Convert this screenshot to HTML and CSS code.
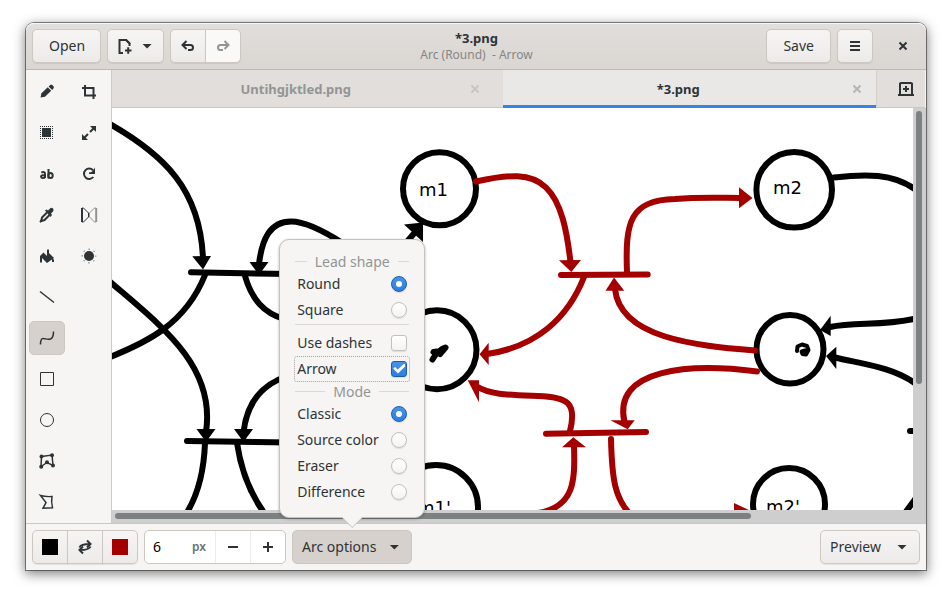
FILE: index.html
```html
<!DOCTYPE html>
<html lang="en">
<head>
<meta charset="utf-8">
<title>*3.png</title>
<link rel="stylesheet" href="styles.css">
</head>
<body>
<main class="window">
  <header class="headerbar">
    <div class="bar-group">
      <button class="btn btn-open" type="button">Open</button>
      <button class="btn btn-new" type="button" aria-label="New image">
        <svg class="icon" viewBox="0 0 16 16"><path d="M6 15H2.500V2H9L12.500 5.500V8" class="line2"/><path d="M8.500 1v1.500L12 6h1.500V5l-4-4z"/><path d="M8 12.500h6.500M11.200 9.300v6.500" class="line2"/></svg>
        <span class="caret"></span>
      </button>
      <div class="linked">
        <button class="btn btn-icon" type="button" aria-label="Undo"><svg class="icon" viewBox="0 0 16 16"><path d="M4 7h6.500a2.500 2.500 0 0 1 0 5H8" class="line2"/><path d="M6.500 3L2.500 7l4 4" class="line2"/></svg></button>
        <button class="btn btn-icon" type="button" aria-label="Redo" disabled><svg class="icon" viewBox="0 0 16 16"><path d="M12 7H5.500a2.500 2.500 0 0 0 0 5H8" class="line2"/><path d="M9.500 3l4 4-4 4" class="line2"/></svg></button>
      </div>
    </div>
    <div class="titles">
      <h1 class="title">*3.png</h1>
      <p class="subtitle">Arc (Round)&nbsp; - Arrow</p>
    </div>
    <div class="bar-group bar-end">
      <button class="btn btn-save" type="button">Save</button>
      <button class="btn btn-icon" type="button" aria-label="Menu"><svg class="icon" viewBox="0 0 16 16"><path d="M3 4h10M3 8h10M3 12h10" class="line2"/></svg></button>
      <button class="window-close" type="button" aria-label="Close"><svg class="icon" viewBox="0 0 16 16"><path d="M4.500 4.500l7 7M11.500 4.500l-7 7" class="line2"/></svg></button>
    </div>
  </header>

  <div class="workspace">
    <nav class="tools" aria-label="Tools">
      <button class="tool" type="button" aria-label="Pencil"><svg class="icon" viewBox="0 0 16 16"><path d="M1.500 13.500l1-4.200L8.700 3.200l3.500 3.500L6 12.700z"/><path d="M9.600 2.400l1.600-1.500q1-.8 2 .2l1.200 1.200q1 1 .2 2L13.100 5.900z"/></svg></button>
      <button class="tool" type="button" aria-label="Crop"><svg class="icon" viewBox="0 0 16 16"><path d="M1 4h11.500v11M4 1v10.500h11" class="line2"/></svg></button>
      <button class="tool" type="button" aria-label="Rectangle selection"><svg class="icon" viewBox="0 0 16 16"><path d="M3 3h9v9H3z"/><path d="M1 1.500h13M1 13.500h13M1.500 1v13M13.500 1v13" class="line1" stroke-dasharray="1 1"/></svg></button>
      <button class="tool" type="button" aria-label="Scale"><svg class="icon" viewBox="0 0 16 16"><path d="M9 1h6v6L12.800 4.800 11.200 3.200zM1 9v6h6L4.800 12.800 3.200 11.200z"/><path d="M12.500 3.500L9 7M3.500 12.500L7 9" class="line2"/></svg></button>
      <button class="tool" type="button" aria-label="Text"><svg class="icon" viewBox="0 0 16 16"><path d="M2.300 6.500Q6 5 6 8v4M6 9Q2 9 2 10.600 2.200 12 4 12q1.500 0 2-1M9.500 3v9.500" class="line2"/><ellipse cx="11.500" cy="9.500" rx="2.200" ry="2.600" class="line2"/></svg></button>
      <button class="tool" type="button" aria-label="Rotate"><svg class="icon" viewBox="0 0 16 16"><path d="M12 4.200A5.200 5.200 0 1 0 12.300 11" class="line2"/><path d="M14 1.500V8H8v-1.500l2.500-.5 1.500-1.500z"/></svg></button>
      <button class="tool" type="button" aria-label="Color picker"><svg class="icon" viewBox="0 0 16 16"><path d="M8 5.500L3 10.500 2.200 14 5.500 13 10.500 8" class="line2"/><path d="M6 3.500l1.500-1 1.500 1 2-2q1.500-1.300 3 0 1.300 1.500 0 3l-2 2 1 1.500L11.500 10z"/><path d="M1 15l2-2" class="line2"/></svg></button>
      <button class="tool" type="button" aria-label="Flip"><svg class="icon" viewBox="0 0 16 16"><path d="M1 1v14" class="line2"/><path d="M1 1h1.500L7.500 6v4l-5 5H1" class="line1"/><g opacity=".5"><path d="M15.200 1v14" class="line2"/><path d="M15 1h-1.500L8.500 6v4l5 5H15" class="line1"/></g></svg></button>
      <button class="tool" type="button" aria-label="Fill"><svg class="icon" viewBox="0 0 16 16"><path d="M4.500 4.500L8 8V2q1-1.500 2 0v3l5 5-7 5-5-5v4.500H1V8z"/><path d="M13 9l2 3v2h-2z"/></svg></button>
      <button class="tool" type="button" aria-label="Filters"><svg class="icon" viewBox="0 0 16 16"><circle cx="8" cy="8" r="5"/><circle cx="8" cy="8" r="6.800" class="line1" stroke-dasharray="1.200 4.140" stroke-dashoffset=".6"/></svg></button>
      <button class="tool first" type="button" aria-label="Line"><svg class="icon" viewBox="0 0 16 16"><path d="M1 2.500l14 11" class="line1 thick"/></svg></button>
      <button class="tool first active" type="button" aria-label="Arc" aria-pressed="true"><svg class="icon" viewBox="0 0 16 16"><path d="M1.500 14.500C1.500 10 2 8.500 4 8.500s5 1.500 7.500.5 3-4 3-7.500" class="line1 thick"/></svg></button>
      <button class="tool first" type="button" aria-label="Rectangle"><svg class="icon" viewBox="0 0 16 16"><path d="M1.500 1.500h13v13h-13z" class="line1"/></svg></button>
      <button class="tool first" type="button" aria-label="Circle"><svg class="icon" viewBox="0 0 16 16"><circle cx="8" cy="8" r="6.500" class="line1"/></svg></button>
      <button class="tool first" type="button" aria-label="Polygon"><svg class="icon" viewBox="0 0 16 16"><path d="M2.500 3.500L13 2l1 10.500L8 9.500l-6 4z" class="line1 thick"/><g><circle cx="2.500" cy="3.500" r="2"/><circle cx="13" cy="2.200" r="2"/><circle cx="14" cy="12.500" r="2"/><circle cx="8" cy="9.300" r="2"/><circle cx="2.200" cy="13.800" r="2"/></g></svg></button>
      <button class="tool first" type="button" aria-label="Freeform shape"><svg class="icon" viewBox="0 0 16 16"><path d="M1.500 1.500q5 1.500 11.500 1-1 4.500.5 11.300L4 14.300 7 8.500z" class="line1 thick"/></svg></button>
    </nav>

    <section class="document">
      <div class="tabs">
        <div class="tab tab-idle"><span class="tab-name">Untihgjktled.png</span><button class="tab-close" type="button" aria-label="Close tab"><svg class="icon" viewBox="0 0 16 16"><path d="M4.500 4.500l7 7M11.500 4.500l-7 7" class="line2"/></svg></button></div>
        <div class="tab tab-current"><span class="tab-name">*3.png</span><button class="tab-close" type="button" aria-label="Close tab"><svg class="icon" viewBox="0 0 16 16"><path d="M4.500 4.500l7 7M11.500 4.500l-7 7" class="line2"/></svg></button></div>
        <button class="tab-new" type="button" aria-label="New tab"><svg class="icon" viewBox="0 0 16 16"><path d="M2 14V2.500L3 2h10l1 .5V14M0 14h16M8 5v6M5 8h6" class="line2"/></svg></button>
      </div>
      <div class="viewport">
        <svg class="drawing" role="img" aria-label="Drawing">
          <g transform="translate(-112 -108)">
            <g class="ink">
              <path d="M108 123C165 155 200 190 203 258"/>
              <path d="M191 272.300L290 274"/>
              <path d="M344 244C321 229 304 221.500 291 221.500C270 221.500 262 239 259 264"/>
              <path d="M205 275C185 325 145 343 110 357"/>
              <path d="M245 276C252 300 264 313 284 319"/>
              <path d="M108 280C160 325 216 365 206 432"/>
              <path d="M288 376C262 384 247 403 243.500 432"/>
              <path d="M187 441L290 442.500"/>
              <path d="M205 443C204 470 198 495 186 514"/>
              <path d="M237 443C241 470 251 495 265 514"/>
              <path d="M417 230L405 244"/>
              <circle cx="439.500" cy="188.700" r="36.500"/>
              <circle cx="437" cy="349.700" r="39.500"/>
              <circle cx="436" cy="507" r="42"/>
              <circle cx="794.200" cy="189.800" r="37.800"/>
              <ellipse cx="790" cy="349.300" rx="33.500" ry="34.200"/>
              <circle cx="789" cy="504" r="36"/>
              <path d="M834 177.500C865 174 893 173 916 190"/>
              <path d="M830 327C855 322 885 326 916 318.500"/>
              <path d="M835 357.500C862 364 893 367 916 384"/>
              <path d="M910 431h12M905 513L919 494"/>
              <path d="M432.500 359.500L436 354L433.500 352L437 351.500L440 354L445.500 347.500L442 349L437 353"/>
              <path d="M797 351L797.500 346.500L802 344.500L807 346L808.500 350L806 354.500L802.500 354L801.500 351.500L805 350.500" stroke-width="4"/>
            </g>
            <g class="heads">
              <path d="M192.300 256.300L211 256L203 269.500z"/>
              <path d="M249.500 262h19L259 275z"/>
              <path d="M196.500 429h19L206 442z"/>
              <path d="M234 429h19L243.500 442z"/>
              <path d="M404 224.500L423 222.500V242z"/>
              <path d="M820 330L830.700 315.700V336z"/>
              <path d="M826 356L836.300 346.700V369z"/>
            </g>
            <g class="ink red">
              <path d="M476 181.500C508 174.500 531 172.500 546 187.500C562 203 567 232 570.500 262"/>
              <path d="M561 275L647.700 274.500"/>
              <path d="M584 277C568 318 536 347 487 354"/>
              <path d="M627 272C625 222 630 200 675 199C700 197 720 198 742 198"/>
              <path d="M755 350.500C695 345.500 620 338 615 289"/>
              <path d="M757 371.500C690 363 612 368 624.500 422"/>
              <path d="M546 433.700L646 432"/>
              <path d="M570 431C577 403 568 397 538 396C510 395 490 395 476 386"/>
              <path d="M574 446C575 480 575 507 538 513"/>
              <path d="M611 439C612 480 615 498 630 514"/>
            </g>
            <g class="heads red">
              <path d="M559 260.300L581 260L571.300 272z"/>
              <path d="M479.500 354.300L488.700 342.700V365z"/>
              <path d="M739 187.300V208.300L752.500 198z"/>
              <path d="M614 277.500L605.500 290.700H624.300z"/>
              <path d="M610.300 420.300H634.700L627.700 429.300z"/>
              <path d="M467.700 380.300H479V402.300z"/>
              <path d="M573.300 437.300L562 447.300H586z"/>
              <path d="M734 503V522L751 511z"/>
            </g>
            <g class="labels">
              <text x="419" y="196">m1</text>
              <text x="773" y="194">m2</text>
              <text x="417" y="514">m1'</text>
              <text x="766" y="513">m2'</text>
            </g>
          </g>
        </svg>
        <div class="scroll-v"><span class="thumb-v"></span></div>
        <div class="scroll-h"><span class="thumb-h"></span></div>
      </div>
    </section>
  </div>

  <footer class="actionbar">
    <div class="linked">
      <button class="btn btn-icon" type="button" aria-label="Main color"><span class="swatch"></span></button>
      <button class="btn btn-icon" type="button" aria-label="Swap colors"><svg class="icon" viewBox="0 0 16 16"><path d="M2.500 8.500C3.500 5.800 6 5 13 5M10 1.500L13.500 5 10 8.500" class="line2"/><path d="M13.500 7.500C12.500 10.200 10 11 3 11M6 7.500L2.500 11 6 14.500" class="line2"/></svg></button>
      <button class="btn btn-icon" type="button" aria-label="Secondary color"><span class="swatch swatch-red"></span></button>
    </div>
    <div class="spin">
      <label class="spin-entry"><input class="spin-input" type="text" inputmode="numeric" value="6" aria-label="Tool width"><span class="unit">px</span></label>
      <button class="spin-step" type="button" aria-label="Decrease"><svg class="icon" viewBox="0 0 16 16"><path d="M3 8h10" class="line2"/></svg></button>
      <button class="spin-step" type="button" aria-label="Increase"><svg class="icon" viewBox="0 0 16 16"><path d="M3 8h10M8 3v10" class="line2"/></svg></button>
    </div>
    <div class="menu-anchor">
      <button class="btn btn-menu btn-pressed" type="button" aria-expanded="true">Arc options<span class="caret"></span></button>
      <form class="popover">
        <p class="heading">Lead shape</p>
        <label class="option">Round<input class="radio" type="radio" name="shape" checked></label>
        <label class="option">Square<input class="radio" type="radio" name="shape"></label>
        <hr class="divider">
        <label class="option">Use dashes<input class="check" type="checkbox"></label>
        <label class="option focused">Arrow<input class="check" type="checkbox" checked></label>
        <p class="heading">Mode</p>
        <label class="option">Classic<input class="radio" type="radio" name="mode" checked></label>
        <label class="option">Source color<input class="radio" type="radio" name="mode"></label>
        <label class="option">Eraser<input class="radio" type="radio" name="mode"></label>
        <label class="option">Difference<input class="radio" type="radio" name="mode"></label>
      </form>
    </div>
    <button class="btn btn-menu btn-preview" type="button">Preview<span class="caret"></span></button>
  </footer>
</main>
</body>
</html>
```
FILE: styles.css
```css
* {
  box-sizing: border-box;
}

body {
  margin: 0;
  min-height: 100vh;
  padding: 23px 26px 29px;
  display: flex;
  background: #fff;
  color: #2e3436;
  font: 14px/20px "Noto Sans", sans-serif;
}

button,
input {
  font: inherit;
  color: inherit;
  margin: 0;
}

button {
  padding: 0;
  border: 0;
  background: none;
  display: flex;
  align-items: center;
  justify-content: center;
}

.window {
  flex: 1;
  min-width: 0;
  display: flex;
  flex-direction: column;
  border-radius: 8px 8px 0 0;
  background: #f6f5f4;
  box-shadow: 0 3px 12px 1px rgba(0, 0, 0, .5), 0 0 0 1px #8e8e8e;
}

.icon {
  width: 16px;
  height: 16px;
  fill: currentColor;
  overflow: visible;
}

.line1,
.line2 {
  fill: none;
  stroke: currentColor;
  stroke-width: 1;
}

.line2 {
  stroke-width: 2;
}

.thick {
  stroke-width: 1.5;
}

.caret {
  width: 10px;
  height: 5px;
  background: currentColor;
  clip-path: polygon(0 0, 100% 0, 50% 100%);
}

/* Header */
.headerbar {
  height: 47px;
  display: grid;
  grid-template-columns: 1fr auto 1fr;
  align-items: center;
  padding: 0 5px 0 6px;
  border-bottom: 1px solid #bfb8b1;
  border-radius: 8px 8px 0 0;
  background: linear-gradient(#e1dedb, #dad6d2);
  box-shadow: inset 0 1px #f9f8f8;
}

.bar-group {
  display: flex;
  gap: 6px;
}

.bar-end {
  justify-content: flex-end;
}

.btn {
  height: 34px;
  border: 1px solid #cdc7c2;
  border-radius: 5px;
  background: linear-gradient(#f6f5f4, #edebe9);
  box-shadow: 0 1px 1px rgba(0, 0, 0, .07);
}

.btn-open,
.btn-save {
  padding: 0 16px;
}

.btn-open {
  padding-right: 15px;
}

.btn-new {
  padding: 0 11px 0 9px;
  gap: 9px;
}

.btn-icon {
  width: 36px;
}

.btn:disabled {
  color: #929595;
  background: #faf9f8;
}

.linked {
  display: flex;
}

.linked .btn + .btn {
  margin-left: -1px;
}

.linked .btn:not(:last-child) {
  border-top-right-radius: 0;
  border-bottom-right-radius: 0;
}

.linked .btn:not(:first-child) {
  border-top-left-radius: 0;
  border-bottom-left-radius: 0;
}

.titles {
  text-align: center;
}

.title {
  margin: 0;
  font-size: 13px;
  font-weight: 700;
  line-height: 18px;
}

.subtitle {
  margin: 0;
  font-size: 12px;
  line-height: 16px;
  color: #868686;
}

.window-close {
  width: 36px;
  height: 34px;
  margin-left: 6px;
}

/* Workspace */
.workspace {
  flex: 1;
  display: flex;
  min-height: 0;
}

.tools {
  display: grid;
  grid-template-columns: 36px 36px;
  grid-auto-rows: 34px;
  gap: 7px 6px;
  padding: 5px 4px 3px 3px;
  border-right: 1px solid #cdc9c5;
}

.tool {
  border: 1px solid transparent;
  border-radius: 5px;
}

.first {
  grid-column: 1;
}

.active {
  background: #d6d1cd;
  border-color: #cdc7c2;
}

.document {
  flex: 1;
  min-width: 0;
  display: flex;
  flex-direction: column;
}

.tabs {
  display: flex;
  height: 38px;
  margin-right: 1px;
  background: #e1dedb;
  border-bottom: 1px solid #cdc7c2;
}

.tab {
  flex: 1 1 0;
  display: flex;
  align-items: center;
  height: 38px;
  font-size: 13px;
  font-weight: 700;
}

.tab-idle {
  padding: 0 19px 0 14px;
  color: #929595;
  height: 37px;
}

.tab-current {
  padding: 0 10px 0 6px;
  background: #eae8e6;
  box-shadow: inset 0 -3px #3584e4;
}

.tab-name {
  flex: 1;
  text-align: center;
}

.tab-close {
  width: 18px;
  height: 18px;
  color: #b5b5b3;
}

.tab-idle .tab-close {
  color: #c8c6c3;
}

.tab-new {
  width: 49px;
  padding-left: 10px;
  border-left: 1px solid #d5d0cc;
}

.viewport {
  flex: 1;
  min-height: 0;
  display: grid;
  grid-template: minmax(0, 1fr) 13px / minmax(0, 1fr) 13px;
  background: #cecece;
}

.drawing {
  width: 100%;
  height: 100%;
  background: #fff;
  overflow: hidden;
}

.ink {
  fill: none;
  stroke: #000;
  stroke-width: 6;
  stroke-linecap: round;
  stroke-linejoin: round;
}

.ink.red {
  stroke: #a40000;
}

.heads.red {
  fill: #a40000;
}

.labels {
  font: 18px "DejaVu Sans", sans-serif;
}

.scroll-v,
.scroll-h {
  padding: 3px;
}

.scroll-h {
  grid-column: 1;
}

.thumb-v,
.thumb-h {
  display: block;
  border-radius: 3px;
  background: #7e8182;
}

.thumb-v {
  width: 6px;
  height: 69%;
}

.thumb-h {
  width: 80%;
  height: 6px;
}

/* Bottom bar */
.actionbar {
  display: flex;
  gap: 6px;
  padding: 6px;
  border-top: 1px solid #cdc7c2;
}

.swatch {
  width: 16px;
  height: 16px;
  background: #000;
}

.swatch-red {
  background: #a40000;
}

.spin {
  display: flex;
  height: 34px;
  border: 1px solid #cdc7c2;
  border-radius: 5px;
  background: #fff;
  overflow: hidden;
}

.spin-entry {
  display: flex;
  align-items: center;
  width: 70px;
  padding: 0 9px 0 8px;
}

.spin-input {
  flex: 1;
  min-width: 0;
  padding: 0;
  border: 0;
  outline: 0;
  background: none;
  color: #000;
}

.unit {
  color: #6b6f70;
  font-size: 12px;
  font-weight: 600;
}

.spin-step {
  width: 35px;
  border-left: 1px solid #edebe9;
}

.menu-anchor {
  position: relative;
}

.btn-menu {
  padding: 0 12px 0 9px;
  gap: 13px;
}

.btn-pressed {
  background: #d6d1cd;
  box-shadow: none;
}

.btn-preview {
  margin-left: auto;
  gap: 16px;
}

/* Options popover */
.popover {
  position: absolute;
  left: 50%;
  bottom: calc(100% + 12px);
  transform: translateX(-50%);
  width: 146px;
  padding: 12px 14px;
  border: 1px solid #c5c1bd;
  border-radius: 10px;
  background: #f6f5f4;
  box-shadow: 0 1px 3px rgba(0, 0, 0, .3);
}

.popover::before,
.popover::after {
  content: "";
  position: absolute;
  top: 100%;
  left: 50%;
  width: 22px;
  height: 11px;
  transform: translateX(-50%);
  background: #c5c1bd;
  clip-path: polygon(0 0, 100% 0, 50% 100%);
}

.popover::after {
  width: 20px;
  height: 10px;
  background: #f6f5f4;
}

.heading {
  display: flex;
  align-items: center;
  gap: 8px;
  margin: 0;
  padding: 0 1px;
  line-height: 19px;
  color: #929595;
  white-space: nowrap;
}

.heading::before,
.heading::after {
  content: "";
  flex: 1;
  height: 1px;
  background: #dbd8d5;
}

.option {
  display: flex;
  align-items: center;
  justify-content: space-between;
  height: 26px;
  padding: 0 3px;
  white-space: nowrap;
}

.focused {
  outline: 1px dotted #a5a3a1;
  outline-offset: -1px;
  border-radius: 3px;
}

.divider {
  height: 1px;
  margin: 1px 1px 5px;
  border: 0;
  background: #d9d6d3;
}

.radio,
.check {
  appearance: none;
  flex: none;
  display: grid;
  place-items: center;
  width: 16px;
  height: 16px;
  border: 1px solid #c4bfba;
  background: linear-gradient(#fff, #f4f3f2);
  box-shadow: 0 1px 1px rgba(0, 0, 0, .1);
}

.radio {
  border-radius: 50%;
}

.check {
  border-radius: 3px;
}

.radio:checked,
.check:checked {
  border-color: #185fb4;
  background: linear-gradient(#4a92e8, #2f7de0);
}

.radio:checked::after {
  content: "";
  width: 6px;
  height: 6px;
  border-radius: 50%;
  background: #fff;
}

.check:checked::after {
  content: "";
  width: 12px;
  height: 10px;
  background: #fff;
  clip-path: polygon(0 45%, 16% 30%, 38% 55%, 88% 0, 100% 0, 100% 22%, 40% 95%);
}
```
